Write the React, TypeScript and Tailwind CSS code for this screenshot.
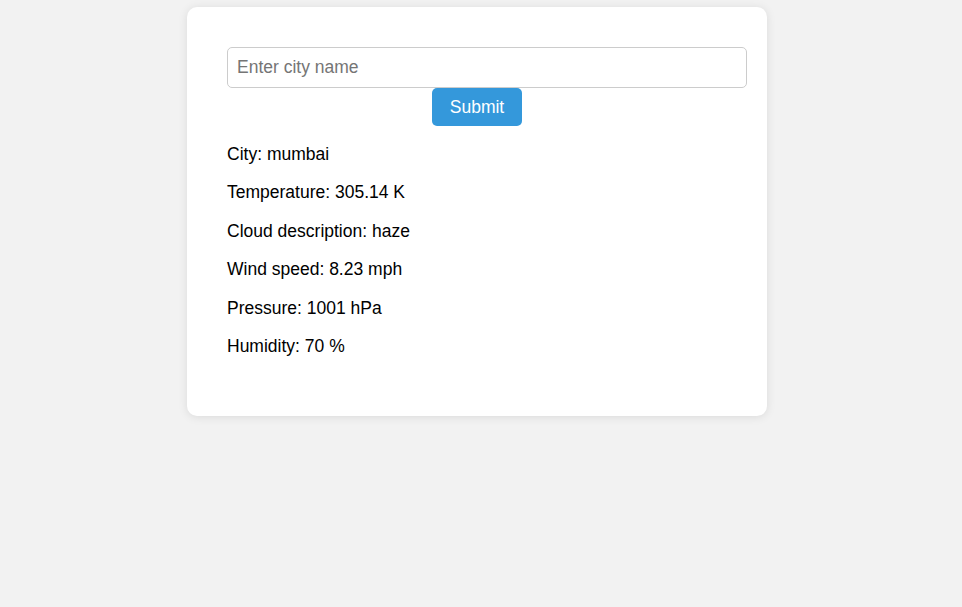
import { useState } from 'react';

const weather = {
  city: 'mumbai',
  temp: '305.14',
  description: 'haze',
  wind: '8.23',
  pressure: '1001',
  humidity: '70',
};

export default function App() {
  const [city, setCity] = useState('');

  return (
    <div className="min-h-screen bg-[#f2f2f2] pt-[7px] pr-[8px] font-['Liberation_Sans',Arial,sans-serif] text-black">
      <div className="mx-auto w-[580px] rounded-[10px] bg-white px-10 pt-10 pb-[42px] shadow-[0_1px_10px_rgba(0,0,0,0.1)]">
        <form
          className="flex flex-col items-center"
          onSubmit={(e) => e.preventDefault()}
        >
          <input
            value={city}
            onChange={(e) => setCity(e.target.value)}
            placeholder="Enter city name"
            className="box-content h-[21px] w-full self-start rounded-[5px] border border-[#ccc] px-[9px] py-[9px] text-[17.5px] leading-[normal] outline-none placeholder:text-[#757575]"
          />
          <button
            type="submit"
            className="h-[38px] w-[90px] rounded-[5px] bg-[#3498db] text-[17.5px] leading-[normal] text-white"
          >
            Submit
          </button>
        </form>

        <div className="text-[17.5px] leading-[20.4px]">
          <p className="my-[18px]">City: {weather.city}</p>
          <p className="my-[18px]">Temperature: {weather.temp} K</p>
          <p className="my-[18px]">Cloud description: {weather.description}</p>
          <p className="my-[18px]">Wind speed: {weather.wind} mph</p>
          <p className="my-[18px]">Pressure: {weather.pressure} hPa</p>
          <p className="my-[18px]">Humidity: {weather.humidity} %</p>
        </div>
      </div>
    </div>
  );
}
